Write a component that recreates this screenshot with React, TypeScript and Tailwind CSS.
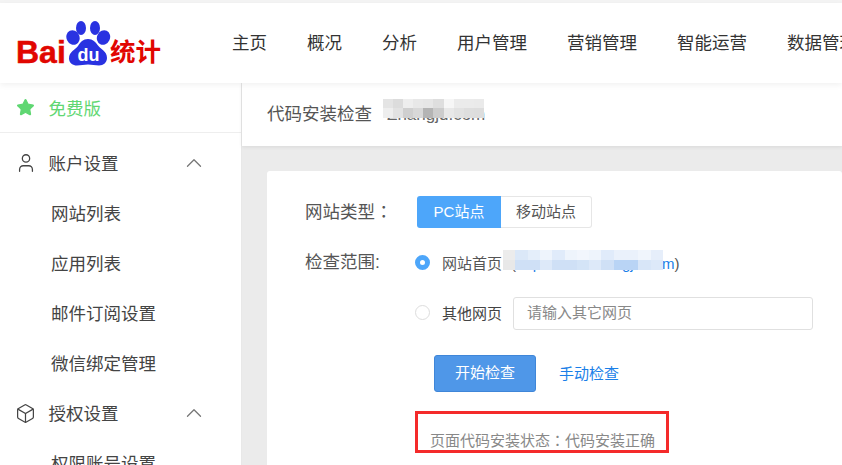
import React from 'react';
import { Star, User, Box, ChevronUp } from 'lucide-react';

const font = { fontFamily: '"Liberation Sans", "Noto Sans CJK SC", sans-serif' };

const navItems = ['主页', '概况', '分析', '用户管理', '营销管理', '智能运营', '数据管理'];

const titleBlur = [
  ['#e4e4e4', '#dcdcdc', '#eeeeee', '#e8e8e8', '#e6e6e6', '#dedede', '#f6f6f6', '#ebebeb', '#ebebeb', '#eaeaea'],
  ['#eeeeee', '#e2e2e2', '#cfcfcf', '#d8d8d8', '#b4b4b4', '#cccccc', '#e8e8e8', '#e2e2e2', '#dedede', '#dddddd'],
];

const urlBlur = [
  ['#ececec', '#dbe8f8', '#e4eefa', '#eef4fc', '#e0ebfa', '#eef4fc', '#f2f6fd', '#eef4fc', '#e0ebfa', '#eaf1fb', '#eaf1fb', '#f0f5fc', '#e6eefa'],
  ['#e8e8e8', '#cfe0f6', '#cfe0f6', '#dde9f9', '#cfe0f6', '#cfe0f6', '#d4e4f7', '#dde9f9', '#cfe0f6', '#b9d4f5', '#b9d4f5', '#d8e6f8', '#dde9f9'],
];

function Mosaic({ rows, cell, pos }: { rows: string[][]; cell: string; pos: string }) {
  return (
    <div className={`absolute flex flex-col ${pos}`}>
      {rows.map((row, i) => (
        <div key={i} className="flex">
          {row.map((c, j) => (
            <div key={j} className={cell} style={{ backgroundColor: c }} />
          ))}
        </div>
      ))}
    </div>
  );
}

function Logo() {
  return (
    <div className="flex items-end w-[146px] h-[46px]">
      <span className="text-[#e10601] font-bold text-[32px] leading-[24px] w-[50px] shrink-0 mb-[2px] [-webkit-text-stroke:0.5px_#e10601]">Bai</span>
      <svg width="45" height="46" viewBox="0 0 45 46" className="shrink-0">
        <g fill="#2932e1">
          <ellipse cx="15" cy="8" rx="5" ry="7" />
          <ellipse cx="29" cy="8" rx="5" ry="7" />
          <ellipse cx="7" cy="17.500" rx="6.500" ry="7.500" transform="rotate(-25 7 17.500)" />
          <ellipse cx="37.500" cy="17.500" rx="6.500" ry="7.500" transform="rotate(25 37.500 17.500)" />
          <path d="M22 19c-5 0-7.500 3-10 7C9.500 29.500 3 31.500 3 38.500 3 43 7 45.500 11 45.500c4 0 7-1 11-1s7 1 11 1c4.500 0 8-3 8-7.500 0-7-6.500-9-9-12.500C29.500 22 27 19 22 19z" />
        </g>
        <text x="22.500" y="41" textAnchor="middle" fill="#ffffff" fontSize="18" fontWeight="700" fontFamily="Liberation Sans, sans-serif">du</text>
      </svg>
      <span className="text-[#e10601] font-bold text-[25.500px] leading-[26px] shrink-0 mb-[1px] -ml-[1px]">统计</span>
    </div>
  );
}

function SideGroup({ icon, label }: { icon: React.ReactNode; label: string }) {
  return (
    <div className="h-[50px] flex items-center pl-[17px] pr-[34px] pt-[2px] text-[17.5px] text-[#444]">
      <span className="w-[31.500px] shrink-0 flex">{icon}</span>
      <span className="flex-1">{label}</span>
      <ChevronUp size={26} strokeWidth={1.2} className="text-[#777] -translate-y-[1px]" />
    </div>
  );
}

function SideItem({ label }: { label: string }) {
  return <div className="h-[50px] flex items-center pl-[51px] pt-[2px] text-[17.5px] text-[#444] whitespace-nowrap">{label}</div>;
}

export default function App() {
  return (
    <div className="w-[842px] h-[465px] overflow-hidden bg-[#ebebeb] flex flex-col" style={font}>
      <div className="h-[3px] bg-[#f4f4f4] shrink-0" />
      <header className="h-[80px] shrink-0 bg-white flex items-center shadow-[0_2px_6px_rgba(0,0,0,0.06)] relative z-10 overflow-hidden">
        <div className="w-[232px] shrink-0 pl-[16px]">
          <Logo />
        </div>
        <nav className="flex gap-[40px] text-[17.5px] text-[#333] whitespace-nowrap">
          {navItems.map((n) => (
            <span key={n}>{n}</span>
          ))}
        </nav>
      </header>

      <div className="flex flex-1 min-h-0">
        <aside className="w-[242px] shrink-0 bg-white border-r border-[#e8e8e8] overflow-hidden">
          <div className="h-[50px] flex items-center pl-[16px] pt-[4px] border-b border-[#eeeeee] text-[17.5px] text-[#5fd772]">
            <span className="w-[32.500px] shrink-0 flex -translate-y-[2px]">
              <Star size={19} fill="#5fd772" strokeWidth={1.5} />
            </span>
            免费版
          </div>
          <div className="pt-[5px]">
            <SideGroup icon={<User size={22} strokeWidth={1.4} className="-ml-[2px] -translate-y-[1px]" />} label="账户设置" />
            <SideItem label="网站列表" />
            <SideItem label="应用列表" />
            <SideItem label="邮件订阅设置" />
            <SideItem label="微信绑定管理" />
            <SideGroup icon={<Box size={21} strokeWidth={1.4} className="-ml-[2px] -translate-y-[1px]" />} label="授权设置" />
            <SideItem label="权限账号设置" />
          </div>
        </aside>

        <main className="flex-1 min-w-0 flex flex-col">
          <div className="h-[63px] shrink-0 bg-white flex items-center pl-[25px] text-[17.5px] text-[#555] shadow-[0_1px_4px_rgba(0,0,0,0.08)] whitespace-nowrap">
            代码安装检查
            <span className="relative ml-[15px] text-[17px] text-[#666]">
              Zhangjd.com
              <Mosaic rows={titleBlur} cell="w-[10.100px] h-[9.500px]" pos="-left-[4px] top-[-3px]" />
            </span>
          </div>

          <div className="ml-[25px] mt-[25px] flex-1 bg-white rounded-t-[3px] pl-[38px] pt-[25px] text-[#555]">
            <div className="flex items-center h-[32px]">
              <span className="w-[112px] text-[17.5px] text-[#555] whitespace-nowrap">
                网站类型<span className="font-['Noto_Sans_CJK_TC']">：</span>
              </span>
              <div className="flex text-[15px]">
                <span className="w-[84px] h-[32px] flex items-center justify-center bg-[#4da6fa] text-white rounded-l-[3px]">PC站点</span>
                <span className="w-[91px] h-[32px] flex items-center justify-center border border-l-0 border-[#e6e6e6] text-[#555] rounded-r-[3px]">移动站点</span>
              </div>
            </div>

            <div className="flex mt-[19px]">
              <span className="w-[110px] text-[17.5px] leading-[26px] pt-[2px] whitespace-nowrap">检查范围:</span>
              <div>
                <div className="flex items-center h-[30px] text-[15px] text-[#555] whitespace-nowrap">
                  <span className="w-[15px] h-[15px] rounded-full border-[5px] border-[#4da6fa] bg-white shrink-0" />
                  <span className="ml-[13px] -translate-x-[1px] translate-y-[2px]">网站首页</span>
                  <span className="relative ml-[8px] translate-y-[2px]">
                    (<span className="text-[#1a7fe8]">http://www.zhangjd.com</span>)
                    <Mosaic rows={urlBlur} cell="w-[12.300px] h-[10px]" pos="-left-[8px] -top-[3px]" />
                  </span>
                </div>
                <div className="flex items-center h-[32px] mt-[19px] text-[15px] whitespace-nowrap">
                  <span className="w-[15px] h-[15px] rounded-full border border-[#dddddd] bg-white shrink-0" />
                  <span className="ml-[13px] -translate-x-[1px] translate-y-[2px] text-[#444]">其他网页</span>
                  <div className="ml-[10px] w-[300px] h-[33px] border border-[#e0e0e0] rounded-[3px] flex items-center pl-[13px] text-[#888] translate-y-[1px]">
                    请输入其它网页
                  </div>
                </div>
                <div className="flex items-center mt-[27px] ml-[19px] text-[15px]">
                  <span className="w-[102px] h-[37px] flex items-center justify-center bg-[#4f97e8] border border-[#3f86d8] rounded-[3px] text-white">开始检查</span>
                  <span className="ml-[23px] text-[#1a7fe8] translate-y-[1px]">手动检查</span>
                </div>
                <div className="mt-[19px] w-[254px] h-[42px] border-[3px] border-[#f42a2a] relative overflow-hidden">
                  <span className="absolute left-[12px] top-[16px] text-[15px] leading-[20px] text-[#888] whitespace-nowrap">
                    页面代码安装状态<span className="font-['Noto_Sans_CJK_TC']">：</span>代码安装正确
                  </span>
                </div>
              </div>
            </div>
          </div>
        </main>
      </div>
    </div>
  );
}
